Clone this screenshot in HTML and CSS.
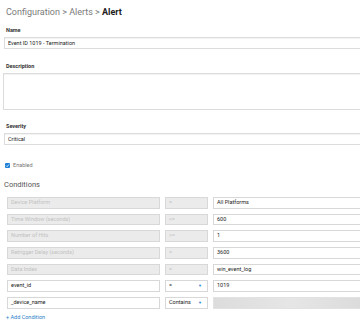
FILE: index.html
```html
<!DOCTYPE html>
<html lang="en">
<head>
    <meta charset="UTF-8">
    <meta name="viewport" content="width=device-width, initial-scale=1.0">
    <title>Alert</title>
    <link rel="stylesheet" href="styles.css">
</head>
<body>
    <div class="page">
        <h1 class="crumbs">Configuration &gt; Alerts &gt; <b>Alert</b></h1>

        <div class="field">
            <label>Name</label>
            <div class="box">Event ID 1019 - Termination</div>
        </div>

        <div class="field">
            <label>Description</label>
            <div class="box area"></div>
        </div>

        <div class="field">
            <label>Severity</label>
            <div class="box">Critical</div>
        </div>

        <div class="check">
            <span class="tick">
                <svg viewBox="0 0 10 10" width="5" height="5"><path d="M2 5.2 L4.2 7.4 L8 2.8" fill="none" stroke="#fff" stroke-width="1.6"/></svg>
            </span>
            Enabled
        </div>

        <h2 class="section">Conditions</h2>

        <div class="conditions">
            <div class="row">
                <div class="cell off">Device Platform</div>
                <div class="cell off">=</div>
                <div class="cell">All Platforms</div>
            </div>
            <div class="row">
                <div class="cell off">Time Window (seconds)</div>
                <div class="cell off">&lt;=</div>
                <div class="cell">600</div>
            </div>
            <div class="row">
                <div class="cell off">Number of Hits</div>
                <div class="cell off">&gt;=</div>
                <div class="cell">1</div>
            </div>
            <div class="row">
                <div class="cell off">Retrigger Delay (seconds)</div>
                <div class="cell off">=</div>
                <div class="cell">3600</div>
            </div>
            <div class="row">
                <div class="cell off">Data Index</div>
                <div class="cell off">=</div>
                <div class="cell">win_event_log</div>
            </div>
            <div class="row">
                <div class="cell">event_id</div>
                <div class="cell select">= <span class="caret">&#9660;</span></div>
                <div class="cell">1019</div>
            </div>
            <div class="row">
                <div class="cell">_device_name</div>
                <div class="cell select">Contains <span class="caret">&#9660;</span></div>
                <div class="cell loading"></div>
            </div>
        </div>

        <a class="add" href="#">+ Add Condition</a>
    </div>
</body>
</html>
```

FILE: styles.css
```css
body {
    margin: 0;
    background: #fff;
    font-family: Roboto, "Liberation Sans", Arial, sans-serif;
    color: #333;
    overflow: hidden;
}

.page {
    width: 470px;
    padding: 0 0 0 4px;
}

.crumbs {
    margin: 0;
    padding: 7px 0 0 2px;
    height: 20px;
    font-size: 9px;
    font-weight: normal;
    color: #7a7a7a;
}

.crumbs b {
    color: #222;
}

.field {
    margin-bottom: 13.5px;
}

.field label {
    display: block;
    padding-left: 2px;
    height: 10px;
    font-size: 5.5px;
    font-weight: bold;
    color: #333;
}

.box {
    box-sizing: border-box;
    height: 12px;
    padding: 0 3px;
    border: 1px solid #dcdcdc;
    box-shadow: inset 0 1px 1px rgba(0, 0, 0, 0.05);
    font-size: 5.5px;
    line-height: 10px;
    color: #222;
}

.box.area {
    height: 37px;
    margin-left: -1px;
}

.check {
    display: flex;
    align-items: center;
    gap: 3px;
    margin: 16px 0 0 1px;
    height: 8px;
    font-size: 5.5px;
    color: #777;
}

.tick {
    display: flex;
    align-items: center;
    justify-content: center;
    width: 5px;
    height: 5px;
    background: #1e7fd6;
    border-radius: 1px;
}

.section {
    margin: 11px 0 0;
    height: 17px;
    font-size: 7.5px;
    font-weight: normal;
    color: #555;
}

.conditions {
    padding-left: 3px;
}

.row {
    display: grid;
    grid-template-columns: 153px 43px 1fr;
    gap: 5px;
    height: 11.6px;
    margin-bottom: 5.07px;
}

.cell {
    box-sizing: border-box;
    height: 100%;
    padding: 0 3px;
    border: 1px solid #d8d8d8;
    background: #fff;
    font-size: 5.5px;
    line-height: 9.6px;
    color: #222;
    white-space: nowrap;
    overflow: hidden;
}

.cell.off {
    background: #ebebeb;
    color: #c2c2c2;
}

.select {
    position: relative;
}

.caret {
    position: absolute;
    right: 5px;
    top: 0;
    font-size: 4px;
    color: #1e7fd6;
}

.cell.loading {
    border-color: #e2e2e2;
    background: linear-gradient(90deg, #dcdcdc, #e6e6e6 30%, #d6d6d6 70%, #e0e0e0);
}

.add {
    display: block;
    margin: 4px 0 0 2px;
    font-size: 5.5px;
    color: #2a7fc8;
    text-decoration: none;
}
```
